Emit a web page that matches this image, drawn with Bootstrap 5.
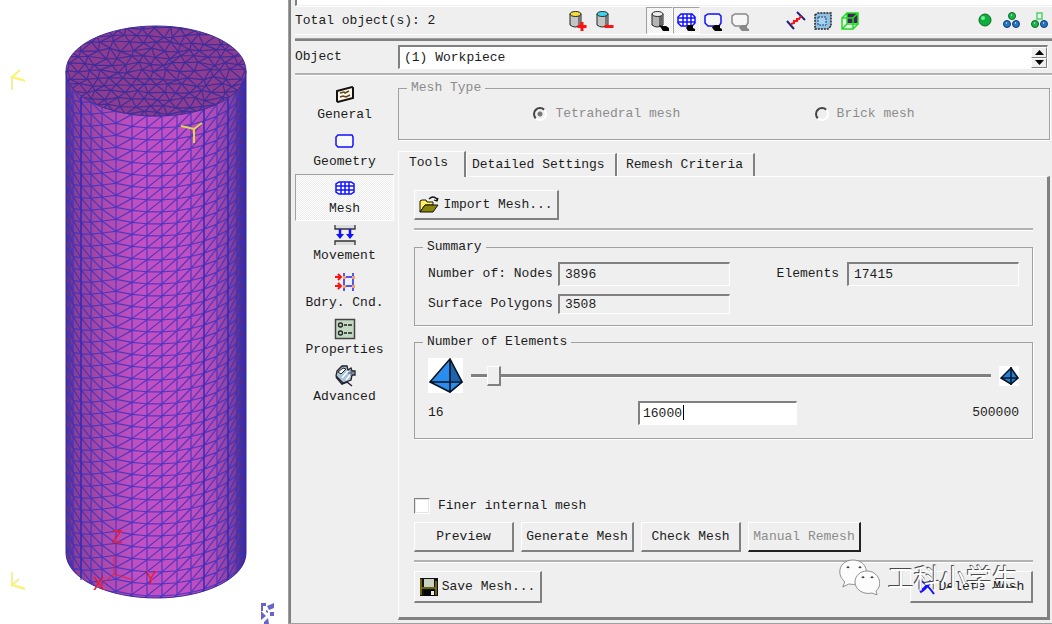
<!DOCTYPE html>
<html lang="en">
<head>
<meta charset="utf-8">
<meta name="viewport" content="width=device-width, initial-scale=1">
<title>Mesh</title>
<link href="https://cdn.jsdelivr.net/npm/bootstrap@5.3.0/dist/css/bootstrap.min.css" rel="stylesheet">
<style>
:root { --face:#efefef; --mid:#a0a0a0; --dark:#808080; }
body { background:#fff; color:#1c1c1c; font:13px/16px "Liberation Mono","Noto Sans CJK SC",monospace; }
button, input, legend { font:inherit; color:inherit; }
button { background:none; border:0; padding:0; }
.viewer { flex:0 0 288px; }
.viewer svg { display:block; }
.props { background:var(--face); border-left:1px solid var(--mid); box-shadow:inset 2px 0 0 var(--dark); border-bottom:1px solid var(--mid); padding-left:6px; }
.list-end { height:6px; background:#fff; border-left:2px solid var(--dark); border-bottom:1px solid var(--face); }
.toolbar { height:29px; border-top:1px solid #fff; border-bottom:1px solid #fff; }
.tool-group { margin-left:28px; }
.tool-group.far { margin-left:108px; }
.tool { width:27px; height:27px; display:grid; place-items:center; }
.pressed { border:1px solid; border-color:var(--mid) #fff #fff var(--mid); background:repeating-conic-gradient(#fff 0 25%,#ececec 0 50%) 0 0/2px 2px; }
.rule-dark { height:3px; margin-top:3px; background:var(--dark); border-top:1px solid var(--mid); }
.rule { height:3px; background:#b2b2b2; border-bottom:1px solid #fff; }
.sunk { border:2px solid; border-color:var(--dark) #fff #fff var(--dark); border-right-width:1px; border-bottom-width:1px; background:var(--face); border-radius:0; outline:0; padding:0 5px; min-width:0; height:24px; }
.sunk.slim { height:20px; }
.white { background:#fff; }
.object-label { width:99px; }
.spin button { width:16px; height:11px; display:grid; place-items:center; background:var(--face); border:1px solid; border-color:#fff var(--dark) var(--dark) #fff; }
.side { width:99px; }
.side button { height:47px; border:1px solid transparent; display:flex; flex-direction:column; align-items:center; gap:2px; padding-top:2px; }
.side button.pressed { border-color:var(--mid) #fff #fff var(--mid); }
.side svg { width:22px; height:22px; }
.work { padding-right:2px; }
.frame { border:1px solid var(--mid); box-shadow:1px 1px 0 #fff; margin:0; }
.frame legend { float:none; width:auto; margin:0 0 0 8px; padding:0 4px; font-size:13px; line-height:16px; }
.type-row { padding:10px 0 17px; }
.pad-sum { padding:7px 13px 11px; }
.pad-count { padding:8px 13px 13px; }
.dim { color:#8c8c8c; }
.radio { appearance:none; width:14px; height:14px; border-radius:50%; border:2px solid; border-color:#444 #fff #fff #444; margin:0; background:var(--face); }
.radio:checked { background:radial-gradient(circle,#777 0 2px,var(--face) 3px); }
.tabs { padding-top:3px; }
.tab { height:23px; text-align:left; border-left:1px solid #fff; border-top:1px solid #fff; border-right:2px solid var(--dark); border-top-left-radius:2px; padding-left:5px; }
.tab.on { height:26px; width:68px; padding:0 0 4px 10px; margin-bottom:-1px; background:var(--face); z-index:1; }
.tab.second { width:151px; }
.tab.third { width:138px; padding-left:8px; }
.pane { border:1px solid #fff; border-right:3px solid var(--dark); border-bottom:3px solid var(--dark); padding:13px 14px 14px 15px; margin-bottom:3px; }
.raised { height:30px; background:var(--face); border:1px solid #fff; border-right:2px solid var(--dark); border-bottom:2px solid var(--dark); display:inline-flex; align-items:center; justify-content:center; gap:4px; white-space:nowrap; }
.raised.default { color:#8c8c8c; border-right-color:#222; border-bottom-color:#222; }
.tall { height:32px; }
.btns { gap:7px; }
.w-short { width:100px; } .w-long { width:113px; } .w-save { width:128px; } .w-import { width:145px; } .w-del { width:123px; }
.sum-label { width:130px; }
.sum-field { width:172px; }
.count { width:159px; padding:0 3px; margin-right:12px; }
.check { appearance:none; width:16px; height:16px; margin:0; background:#fff; border:2px solid; border-color:var(--dark) #fff #fff var(--dark); outline:1px solid #e4e4e4; outline-offset:-2px; }
.slide { appearance:none; background:none; height:20px; margin:0; min-width:0; }
.slide::-webkit-slider-runnable-track { height:4px; background:#fff; border-top:3px solid var(--dark); }
.slide::-webkit-slider-thumb { appearance:none; width:14px; height:20px; margin-top:-11px; background:var(--face); border:1px solid #fff; border-right:2px solid var(--dark); border-bottom:2px solid var(--dark); }
.caret { width:1px; height:15px; background:#000; left:45px; top:4px; }
.watermark { right:34px; bottom:28px; pointer-events:none; }
.watermark span { font:26px/36px "Noto Sans CJK SC",sans-serif; color:#fff; text-shadow:-1px -1px 0 #4a4a4a,0 -1px 0 #777; }
</style>
</head>
<body>
<div class="d-flex min-vh-100 overflow-hidden">
<main class="viewer">
<svg width="288" height="624" viewBox="0 0 288 624" aria-label="Meshed workpiece">
<defs>
<linearGradient id="side"><stop offset="0" stop-color="#5a3480"/><stop offset=".05" stop-color="#8a3f94"/><stop offset=".2" stop-color="#aa4aac"/><stop offset=".4" stop-color="#c250c2"/><stop offset=".66" stop-color="#c250c2"/><stop offset=".82" stop-color="#b04cb4"/><stop offset=".93" stop-color="#84409a"/><stop offset="1" stop-color="#38246c"/></linearGradient>
<clipPath id="body"><path d="M66 71A90 45 0 0 0 246 71V553A90 45 0 0 1 66 553Z"/></clipPath>
<clipPath id="cap"><ellipse cx="156" cy="71" rx="90" ry="45"/></clipPath>
</defs>
<path d="M66 71H246V553A90 45 0 0 1 66 553Z" fill="url(#side)"/>
<path id="wall" clip-path="url(#body)" fill="none" stroke="#3a30c0" stroke-width="1.200" stroke-opacity=".8"/>
<path d="M204 105V591M228 97V580M81 97V580" stroke="#2b24b0"/>
<ellipse cx="156" cy="71" rx="90" ry="45" fill="#8d3c90"/>
<path id="lid" clip-path="url(#cap)" fill="none" stroke="#302a9c" stroke-width="1.200" stroke-opacity=".85"/>
<ellipse cx="156" cy="71" rx="90" ry="45" fill="none" stroke="#3a309e"/>
<path d="M66 71V553A90 45 0 0 0 246 553V71" fill="none" stroke="#37289a"/>
<g fill="none" stroke-width="2"><path d="M20 70L12 77L25 81M12 77V90M12 572V585L19 579M12 585L25 589" stroke="#f3ef9c"/><path d="M19 71L12 77L24 80M12 583V585L24 588" stroke="#ffff2a" stroke-width="1"/><path d="M181 126L194 129L202 123M194 129V143" stroke="#e5d24c"/></g>
<g stroke="#e6203c" fill="none"><path d="M114 555V574L133 580M114 574L100 586"/></g>
<g fill="#f01c30" font-family="Liberation Sans,sans-serif" font-size="18"><text x="112" y="543">Z</text><text x="145" y="584">Y</text><text x="93" y="590">X</text></g>
<path d="M261 603h5v3h-3v5h-2zM267 606l7-3v5l-5 2zM261 611l5 5l-5 4zM270 612h4v4h-4zM264 622l4-4l1 6h-5zM266 610l2 1v2l-2-1z" fill="#6864cc"/>
</svg>
</main>

<section class="props flex-grow-1 d-flex flex-column position-relative">
<div class="list-end"></div>
<div class="toolbar d-flex align-items-center">
<span class="me-auto text-nowrap">Total object(s): 2</span>
<div class="tool-group d-flex">
<button class="tool" aria-label="Add object"><svg width="20" height="22" viewBox="0 0 20 22"><path d="M2 4v11q5 4 11 0V4" fill="#c4c4c4" stroke="#222"/><path d="M10 5h2v11h-2z" fill="#777"/><ellipse cx="7.500" cy="4" rx="5.500" ry="2.500" fill="#f5dc3c" stroke="#222"/><path d="M14 12v9M9.500 16.500h9" stroke="#f11" stroke-width="3"/></svg></button>
<button class="tool" aria-label="Remove object"><svg width="20" height="22" viewBox="0 0 20 22"><path d="M2 4v11q5 4 11 0V4" fill="#c4c4c4" stroke="#222"/><path d="M10 5h2v11h-2z" fill="#777"/><ellipse cx="7.500" cy="4" rx="5.500" ry="2.500" fill="#3cd4ee" stroke="#222"/><path d="M9.500 16.500h9" stroke="#f11" stroke-width="3"/></svg></button>
</div>
<div class="tool-group d-flex">
<button class="tool pressed" aria-label="Show object"><svg width="20" height="22" viewBox="0 0 20 22"><path d="M2 4v11q5 4 11 0V4" fill="#b4b4b4" stroke="#222"/><path d="M9 6h3v10H9z" fill="#666"/><ellipse cx="7.500" cy="4" rx="5.500" ry="2.500" fill="#eee" stroke="#222"/><path d="M9 15l3 1h4l3 2v3h-6l-2-3z"/></svg></button>
<button class="tool pressed" aria-label="Show mesh"><svg width="20" height="22" viewBox="0 0 20 22"><path d="M4 4h11l3 3v6l-3 3H4l-3-3V7zM1 8h17M1 12h17M6 4v12M10 4v12M14 4v12" fill="#fff" stroke="#11f" stroke-width="1.500"/><path d="M9 18l2-3h5v3l2 1v2h-7z"/></svg></button>
<button class="tool" aria-label="Show geometry"><svg width="20" height="22" viewBox="0 0 20 22"><path d="M4 4h11l2 2v7l-2 3H4l-3-3V6z" fill="#f6f6f6" stroke="#11f" stroke-width="1.500"/><path d="M8 17l3-2h5v3l2 1v2h-7l-2-2z"/></svg></button>
<button class="tool" aria-label="Hide object"><svg width="20" height="22" viewBox="0 0 20 22"><path d="M4 4h11l2 2v7l-2 3H4l-3-3V6z" fill="#f6f6f6" stroke="#888" stroke-width="1.500"/><path d="M8 17l3-2h5v3l2 1v2h-7l-2-2z" fill="#888"/></svg></button>
</div>
<div class="tool-group d-flex">
<button class="tool" aria-label="Measure"><svg width="20" height="20" viewBox="0 0 20 20"><path d="M1 10l7 8M11 1l8 8" stroke="#1c2480" stroke-width="2"/><path d="M5 13l3-1v-2h3V8h2l2-3" fill="none" stroke="#f11" stroke-width="2"/></svg></button>
<button class="tool" aria-label="Select region"><svg width="20" height="20" viewBox="0 0 20 20"><path d="M2 4l3-2h13v13l-3 3H2z" fill="#8fc2e6" stroke="#222" stroke-dasharray="2 1" stroke-width="1.500"/><rect x="5" y="6" width="8" height="8" fill="#a8d2f0" stroke="#246" stroke-dasharray="2 1"/></svg></button>
<button class="tool" aria-label="Box view"><svg width="20" height="20" viewBox="0 0 20 20"><path d="M7 2h11v10H7z" fill="#44245c"/><path d="M2 7h11v11H2zM7 2h11v11H7zM2 7l5-5M13 7l5-5M13 18l5-5M2 18l5-5" fill="none" stroke="#1be01b" stroke-width="1.500"/></svg></button>
</div>
<div class="tool-group far d-flex">
<button class="tool" aria-label="Single object"><svg width="18" height="18" viewBox="0 0 18 18"><circle cx="9" cy="8" r="6" fill="#0fae3c" stroke="#066b22"/><circle cx="7" cy="6" r="2" fill="#6ff09a"/></svg></button>
<button class="tool" aria-label="All objects"><svg width="18" height="18" viewBox="0 0 18 18"><circle cx="9" cy="4" r="3.500" fill="#18b848" stroke="#066b22"/><circle cx="4" cy="12" r="3.500" fill="#2377c4" stroke="#113a72"/><circle cx="13" cy="12" r="3.500" fill="#2377c4" stroke="#113a72"/><path d="M8 3h1M3 11h1M12 11h1" stroke="#bdf" stroke-width="1.500"/></svg></button>
<button class="tool" aria-label="Some objects"><svg width="18" height="18" viewBox="0 0 18 18"><path d="M7 1h5v6H7z" fill="#f4fff4" stroke="#4bd565" stroke-width="1.500"/><circle cx="5" cy="12" r="3.500" fill="#18b848" stroke="#066b22"/><circle cx="14" cy="12" r="3.500" fill="#2377c4" stroke="#113a72"/><path d="M4 11h1M13 11h1" stroke="#bdf" stroke-width="1.500"/></svg></button>
</div>
</div>
<div class="rule-dark"></div>

<div class="d-flex align-items-center py-1 pe-1">
<label for="object" class="object-label">Object</label>
<div class="sunk white d-flex flex-grow-1 px-0 ms-1">
<input id="object" class="border-0 flex-grow-1 ps-1 bg-transparent" value="(1) Workpiece">
<div class="spin d-flex flex-column"><button aria-label="Previous"><svg width="9" height="5"><path d="M0 5h9L4.500 0z"/></svg></button><button aria-label="Next"><svg width="9" height="5"><path d="M0 0h9L4.500 5z"/></svg></button></div>
</div>
</div>
<div class="rule"></div>

<div class="work d-flex flex-grow-1">
<nav class="side d-flex flex-column pt-1 me-1 flex-shrink-0">
<button><svg viewBox="0 0 22 22"><path d="M3 8l15-4l1 1v10l-15 4l-1-1z" fill="#fff7e6" stroke="#111" stroke-width="2"/><path d="M6 10l4-1l1 1l4-2M6 14l3-1l3 1l4-2" stroke="#58451f" stroke-width="1.500" fill="none"/></svg>General</button>
<button><svg viewBox="0 0 22 22"><path d="M4 5h14l1 2v8l-1 2H4l-2-2V7z" fill="#fff" fill-opacity=".6" stroke="#11f" stroke-width="1.500"/></svg>Geometry</button>
<button class="pressed"><svg viewBox="0 0 22 22"><path d="M5 5h12l3 2v8l-3 2H5l-3-2V7zM2 9h18M2 13h18M7 5v12M11 5v12M15 5v12" fill="#fff" stroke="#11f" stroke-width="1.500"/></svg>Mesh</button>
<button><svg viewBox="0 0 22 22"><path d="M1 1v4h20V1M1 21v-4h20v4" fill="#ddd" stroke="#333" stroke-width="1.300"/><path d="M6 5v7M16 5v7" stroke="#11f" stroke-width="2.500"/><path d="M2 10h8l-4 5zM12 10h8l-4 5z" fill="#11f"/></svg>Movement</button>
<button><svg viewBox="0 0 22 22"><path d="M10 2v18M19 2v18M10 6h9M10 15h9" stroke="#22f" stroke-width="1.500"/><path d="M1 6h6M4 3l3 3l-3 3M1 15h6M4 12l3 3l-3 3" fill="none" stroke="#f11" stroke-width="2"/><path d="M9 5h3v3H9zM18 5h3v3h-3zM9 14h3v3H9zM18 14h3v3h-3z" fill="#f4a45a"/></svg>Bdry.&nbsp;Cnd.</button>
<button><svg viewBox="0 0 22 22"><path d="M1.500 1.500h19v19h-19z" fill="#c2d8c2" stroke="#444" stroke-width="1.500"/><circle cx="6.500" cy="7" r="2" fill="none" stroke="#222" stroke-width="1.300"/><circle cx="6.500" cy="15" r="2" fill="none" stroke="#222" stroke-width="1.300"/><path d="M10 7h3m1 0h4M10 15h3m1 0h4" stroke="#222" stroke-width="1.500"/></svg>Properties</button>
<button><svg viewBox="0 0 22 22"><path d="M3 6L8 1h5l1 4l3-2l1 3h3v4h-3l-1 5l-8 3l-7-7z" fill="#a8c4d8" stroke="#222" stroke-width="1.300"/><path d="M4 7l5-4l3 1l-5 5z" fill="#fff" stroke="#222"/><path d="M8 13l6-7M12 15l5-6" stroke="#fff" stroke-width="1.500"/><path d="M14 8h6M17 5v6" stroke="#557" /><path d="M2 12l6 7l5-2l5 4" stroke="#223" stroke-width="1.500" fill="none"/></svg>Advanced</button>
</nav>

<div class="d-flex flex-column flex-grow-1 pt-1">
<fieldset class="frame dim mb-2" disabled>
<legend>Mesh Type</legend>
<div class="type-row d-flex justify-content-evenly text-nowrap">
<div class="d-flex align-items-center gap-2"><input class="radio" type="radio" name="type" id="tet" checked><label for="tet">Tetrahedral mesh</label></div>
<div class="d-flex align-items-center gap-2"><input class="radio" type="radio" name="type" id="brick"><label for="brick">Brick mesh</label></div>
</div>
</fieldset>
<div class="tabs d-flex align-items-end" role="tablist">
<button class="tab on position-relative" role="tab">Tools</button><button class="tab second" role="tab">Detailed Settings</button><button class="tab third" role="tab">Remesh Criteria</button>
</div>
<div class="pane flex-grow-1 d-flex flex-column">
<div class="d-flex"><button class="raised w-import"><svg width="20" height="18" viewBox="0 0 20 18"><path d="M1 16V5l2-1h4l1 2h6v3H6z" fill="#fff25a" stroke="#111"/><path d="M1 16L6 9h13l-5 7z" fill="#8a8408" stroke="#111"/><path d="M10 3q4-4 8 0v2M15 4l3 1l1-3" fill="none" stroke="#111" stroke-width="1.300"/></svg>Import Mesh...</button></div>
<div class="rule my-2"></div>
<fieldset class="frame">
<legend>Summary</legend>
<div class="pad-sum d-flex flex-column gap-2">
<div class="d-flex align-items-center">
<label class="sum-label" for="nodes">Number of: Nodes</label><input class="sunk sum-field" id="nodes" value="3896" readonly>
<label class="ms-auto me-2" for="elements">Elements</label><input class="sunk sum-field" id="elements" value="17415" readonly>
</div>
<div class="d-flex align-items-center"><label class="sum-label" for="polys">Surface Polygons</label><input class="sunk slim sum-field" id="polys" value="3508" readonly></div>
</div>
</fieldset>
<fieldset class="frame mt-2">
<legend>Number of Elements</legend>
<div class="pad-count">
<div class="d-flex align-items-center">
<svg class="flex-shrink-0 me-2" width="35" height="35" viewBox="0 0 35 35"><path d="M0 0h35v35H0z" fill="#fff"/><path d="M22 2L2 24l20 11z" fill="#2a8cec"/><path d="M22 2l13 22l-13 11z" fill="#1c64b0"/><path d="M22 23h12l-12 11z" fill="#2a8cec"/><path d="M22 1L2 24l20 10l12-10zV34M2 24h32" fill="none" stroke="#0a1420" stroke-width="1.600"/></svg>
<input class="slide flex-grow-1" type="range" min="16" max="500000" value="16000" aria-label="Number of elements">
<svg class="flex-shrink-0 ms-2" width="20" height="20" viewBox="0 0 20 20"><path d="M0 0h20v20H0z" fill="#fff"/><path d="M12 2L2 12l10 6l7-6z" fill="#2280da" stroke="#0a1420" stroke-width="1.500"/><path d="M12 1v18M2 12h17" stroke="#0a1420" stroke-width="1.500"/></svg>
</div>
<div class="row g-0 align-items-center pt-2">
<span class="col">16</span>
<div class="col-auto position-relative"><input class="sunk white count" id="count" value="16000" aria-label="Element count"><span class="caret position-absolute"></span></div>
<span class="col text-end">500000</span>
</div>
</div>
</fieldset>
<div class="mt-auto d-flex align-items-center gap-2 pb-2"><input class="check" type="checkbox" id="finer"><label for="finer">Finer internal mesh</label></div>
<div class="btns d-flex">
<button class="raised w-short">Preview</button><button class="raised w-long">Generate Mesh</button><button class="raised w-short">Check Mesh</button><button class="raised default w-long" disabled>Manual Remesh</button>
</div>
<div class="rule my-2"></div>
<div class="d-flex justify-content-between">
<button class="raised tall w-save"><svg width="18" height="18" viewBox="0 0 18 18"><path d="M0 0h18v18H0z" fill="#111"/><path d="M1 1v16M16 3v14M1 10h15" stroke="#857c12" stroke-width="1.500"/><path d="M4 1h10v8H4z" fill="#c8d0c0"/><path d="M4 12h10v6H4z"/><path d="M11 13h3v4h-3z" fill="#eee"/></svg>Save Mesh...</button>
<button class="raised tall w-del"><svg width="17" height="17" viewBox="0 0 17 17"><path d="M2 2q7 4 14 14" stroke="#11f" stroke-width="2" fill="none"/><path d="M2 14Q7 11 13 3" stroke="#11f" stroke-width="3" fill="none"/></svg>Delete Mesh</button>
</div>
</div>
</div>
</div>
<div class="watermark position-absolute d-flex align-items-center gap-2">
<svg width="41" height="36" viewBox="0 0 41 36" fill="#fcfcfc" stroke="#777" stroke-width=".8"><path d="M14 1C6 1 .8 6 .8 13c0 4 2 7 5 10l-2 5l6-3q5 1 9 0C32 21 30 1 14 1z"/><path d="M28 12c-7 0-12 5-12 11c0 8 9 13 17 11l5 2l-1-4c8-7 2-20-9-20z"/><path d="M8 9q1-2 2 0M20 9q1-2 2 0M23 19q1-2 2 0M32 19q1-2 2 0" fill="none" stroke="#444" stroke-width="1.500"/></svg>
<span>工科小学生</span>
</div>
</section>
</div>
<script>
// Side wall: triangular cells on the left, diagonal-split quads elsewhere
const cols = [66, 73, 81, 91, 102, 116, 132, 147, 162, 177, 191, 204, 217, 228, 237, 243, 246];
const bow = x => 45 * Math.sqrt(Math.max(0, 1 - ((x - 156) / 90) ** 2));
const step = 12;
let wall = '';
cols.forEach((x, i) => {
  wall += `M${x} 60V600`;
  const nx = cols[i + 1];
  if (nx === undefined) return;
  for (let k = 0; k < 42; k++) {
    const y = 71 + k * step;
    const a = y + bow(x), b = y + bow(nx);
    if (i < 5) {
      const s = i % 2 ? 0 : step / 2;
      const t = step / 2 - s;
      wall += `M${x} ${a + s}L${nx} ${b + t}L${x} ${a + s + (s ? -step : step)}`;
    } else {
      wall += `M${x} ${a}L${nx} ${b}M${x} ${a + step}L${nx} ${b}`;
    }
  }
});
document.getElementById('wall').setAttribute('d', wall);

// Lid: jittered triangular grid
let seed = 7;
const rnd = () => (seed = (seed * 16807) % 2147483647) / 2147483647 - 0.5;
const pts = [];
for (let r = 0; r < 15; r++) {
  pts.push([]);
  for (let c = 0; c < 16; c++) pts[r].push([58 + c * 13 + (r % 2 ? 6 : 0) + rnd() * 7, 22 + r * 7 + rnd() * 4]);
}
let lid = '';
const join = (p, q) => { if (q) lid += `M${p[0]} ${p[1]}L${q[0]} ${q[1]}`; };
pts.forEach((row, r) => row.forEach((p, c) => {
  join(p, row[c + 1]);
  const next = pts[r + 1];
  if (next) { join(p, next[c]); join(p, next[r % 2 ? c + 1 : c - 1]); }
}));
document.getElementById('lid').setAttribute('d', lid);
</script>
<script src="https://cdn.jsdelivr.net/npm/bootstrap@5.3.0/dist/js/bootstrap.bundle.min.js"></script>
</body>
</html>
